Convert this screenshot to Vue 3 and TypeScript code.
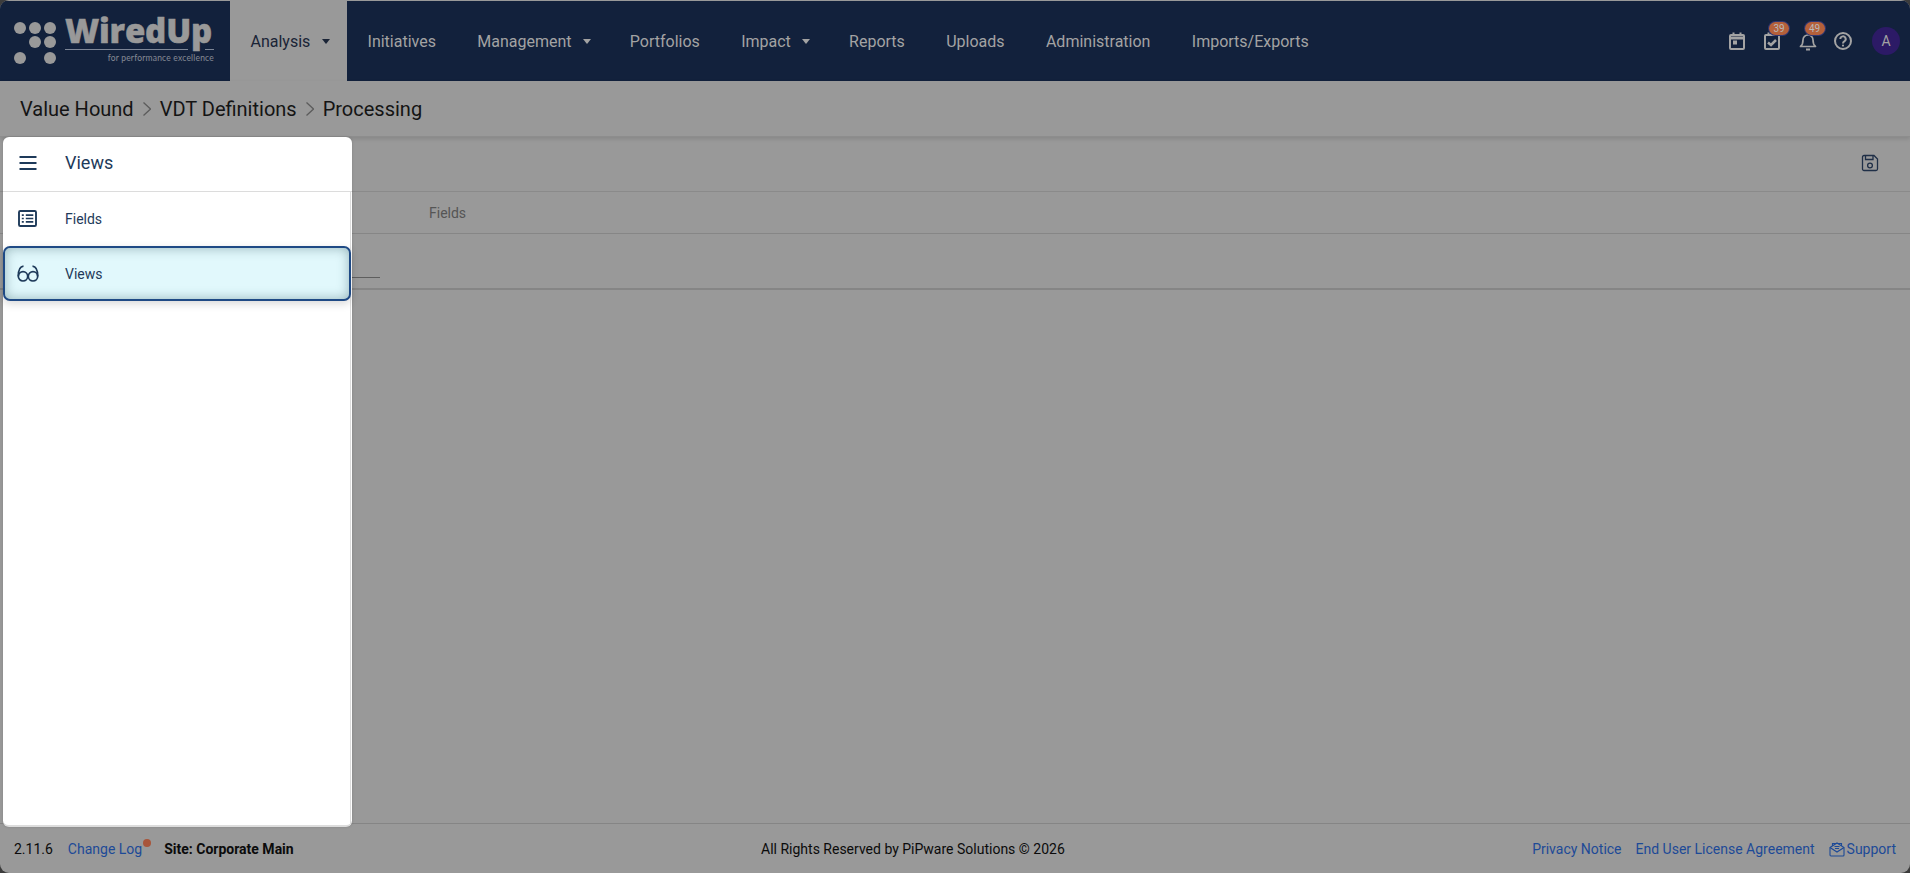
<script setup lang="ts">
interface NavItem { label: string; caret?: boolean; active?: boolean }
const navItems: NavItem[] = [
  { label: 'Analysis', caret: true, active: true },
  { label: 'Initiatives' },
  { label: 'Management', caret: true },
  { label: 'Portfolios' },
  { label: 'Impact', caret: true },
  { label: 'Reports' },
  { label: 'Uploads' },
  { label: 'Administration' },
  { label: 'Imports/Exports' },
]
const crumbs = ['Value Hound', 'VDT Definitions', 'Processing']
const dots = [[6,6],[21,6],[36,6],[21,20],[36,20],[6,36],[36,36]]
</script>

<template>
  <div class="page">
    <header class="topbar">
      <div class="logo">
        <svg class="logo-dots" width="42" height="42" viewBox="0 0 42 42">
          <circle v-for="(d, i) in dots" :key="i" :cx="d[0]" :cy="d[1]" r="6" fill="#999" />
        </svg>
        <div class="logo-text">
          <div class="logo-word">WiredUp</div>
          <div class="logo-line"><i></i><i></i></div>
          <div class="logo-tag">for performance excellence</div>
        </div>
      </div>
      <nav class="nav">
        <a v-for="n in navItems" :key="n.label" class="nav-item" :class="{ active: n.active, caret: n.caret }">
          {{ n.label }}<span v-if="n.caret" class="caret-mark"></span>
        </a>
      </nav>
      <div class="top-icons">
        <svg class="ti" width="22" height="22" viewBox="0 0 22 22" fill="none" stroke="#a3a3a3" stroke-width="2">
          <rect x="4" y="5" width="14" height="14" rx="1" />
          <path d="M4 8h14" stroke-width="3" /><path d="M7.500 2.500v3M14.500 2.500v3" />
          <rect x="7" y="10.500" width="4" height="4" fill="#a3a3a3" stroke="none" />
        </svg>
        <div class="ti-wrap">
          <svg class="ti" width="22" height="22" viewBox="0 0 22 22" fill="none" stroke="#a3a3a3" stroke-width="2">
            <rect x="4" y="5" width="14" height="14" rx="1" />
            <path d="M7 12.500l3 2.500 5-5" stroke-width="2.500" /><path d="M7.500 2.500v3" />
          </svg>
          <span class="badge">39</span>
        </div>
        <div class="ti-wrap">
          <svg class="ti" width="22" height="22" viewBox="0 0 22 22" fill="none" stroke="#a3a3a3" stroke-width="1.700">
            <path d="M3.500 16.500c2-1.500 2.500-3 2.500-6.500a5 5 0 0 1 10 0c0 3.500 .5 5 2.500 6.500z" stroke-linejoin="round" />
            <path d="M9 19.500h4" stroke-width="2" /><path d="M11 3v2" />
          </svg>
          <span class="badge">49</span>
        </div>
        <svg class="ti" width="22" height="22" viewBox="0 0 22 22" fill="none" stroke="#a3a3a3" stroke-width="2">
          <circle cx="11" cy="11" r="8" />
          <path d="M8.300 9a2.700 2.700 0 1 1 4 2.400c-.9.500-1.300 1-1.300 2" />
          <circle cx="11" cy="15.600" r="1.100" fill="#a3a3a3" stroke="none" />
        </svg>
        <div class="avatar">A</div>
      </div>
    </header>

    <div class="crumbs">
      <template v-for="(c, i) in crumbs" :key="c">
        <span>{{ c }}</span>
        <svg v-if="i < crumbs.length - 1" class="chev" width="8" height="16" viewBox="0 0 8 16" fill="none" stroke="#5c5c5c" stroke-width="1.300">
          <path d="M.5 1.500L7.500 8l-7 6.500" />
        </svg>
      </template>
    </div>

    <main class="content">
      <div class="toolbar">
        <svg width="18" height="18" viewBox="0 0 18 18" fill="none" stroke="#1f2f47" stroke-width="1.300">
          <path d="M1.500 3a1.500 1.500 0 0 1 1.500-1.500h10l3.500 3.500v10a1.500 1.500 0 0 1-1.500 1.500H3a1.500 1.500 0 0 1-1.500-1.500z" />
          <path d="M4.500 1.500v4h7.500v-4" /><circle cx="9" cy="11.500" r="2.400" />
        </svg>
      </div>
      <div class="thead"><span class="th-label">Fields</span></div>
      <div class="trow"><span class="row-mark"></span></div>
    </main>

    <footer class="footer">
      <div class="foot-left">
        <span>2.11.6</span>
        <a class="link log">Change Log<i class="log-dot"></i></a>
        <b>Site: Corporate Main</b>
      </div>
      <div class="foot-center">All Rights Reserved by PiPware Solutions © 2026</div>
      <div class="foot-right">
        <a class="link">Privacy Notice</a>
        <a class="link">End User License Agreement</a>
        <a class="link support">
          <svg width="16" height="16" viewBox="0 0 16 16" fill="none" stroke="#1d4a97" stroke-width="1.100">
            <path d="M1 6.500L8 2l7 4.500V14a1 1 0 0 1-1 1H2a1 1 0 0 1-1-1z" />
            <path d="M1 6.500L8 11l7-4.500" /><path d="M3.500 5V2.500h9V5M5.500 5.500h5M6 7.500h4" />
          </svg>Support
        </a>
      </div>
    </footer>

    <aside class="drawer">
      <div class="drawer-head">
        <svg width="18" height="14" viewBox="0 0 18 14" fill="none" stroke="#1e3a5a" stroke-width="2">
          <path d="M0.500 1h17M0.500 7h17M0.500 13h17" />
        </svg>
        <span>Views</span>
      </div>
      <div class="drawer-body">
        <div class="drawer-item first">
          <svg width="19" height="17" viewBox="0 0 19 17" fill="none" stroke="#1e3a5a" stroke-width="1.900">
            <rect x="1" y="1" width="17" height="15" rx="1.300" />
            <path d="M3.800 5.200h2M3.800 8.500h2M3.800 11.800h2M7.800 5.200h7.500M7.800 8.500h7.500M7.800 11.800h7.500" stroke-width="1.700" />
          </svg>
          <span>Fields</span>
        </div>
        <div class="drawer-item selected">
          <svg width="22" height="17" viewBox="0 0 22 17" fill="none" stroke="#1e3a5a" stroke-width="1.700">
            <circle cx="6" cy="11.300" r="4.700" /><circle cx="16" cy="11.300" r="4.700" />
            <path d="M10.700 11.300h.6" />
            <path d="M1.300 11.300C1.300 6 2.500 1.600 6.500 1.200M20.700 11.300c0-5.300-1.200-9.700-5.200-10.100" />
          </svg>
          <span>Views</span>
        </div>
      </div>
    </aside>
  </div>
</template>

<style>
html, body { margin: 0; background: #3c3c3c; overflow: hidden; }
</style>

<style scoped>
.page {
  position: relative;
  box-sizing: border-box;
  width: 1910px;
  height: 873px;
  display: flex;
  flex-direction: column;
  padding-top: 1px;
  border-radius: 9px;
  overflow: hidden;
  background: #999999;
  font-family: Roboto, "Liberation Sans", sans-serif;
  color: #0c0c0c;
}
.topbar {
  height: 80px;
  flex: none;
  display: flex;
  align-items: stretch;
  background: #12213c;
  color: #a3a3a3;
}
.logo {
  width: 230px;
  flex: none;
  display: flex;
  align-items: flex-start;
  box-sizing: border-box;
  padding: 21px 0 0 14px;
}
.logo-dots { flex: none; }
.logo-text { margin-left: 9px; width: 149px; margin-top: -10px; }
.logo-word {
  font-family: "Open Sans", sans-serif;
  font-weight: 800;
  font-size: 33px;
  line-height: 37px;
  height: 37px;
  letter-spacing: -0.200px;
  -webkit-text-stroke: 0.500px #999;
  color: #999;
  white-space: nowrap;
}
.logo-line { display: flex; justify-content: space-between; height: 1px; }
.logo-line i { display: block; background: #7d8697; width: 123px; }
.logo-line i + i { width: 9px; }
.logo-tag {
  font-family: Lato, sans-serif;
  font-size: 8.500px;
  line-height: 11px;
  letter-spacing: 0.200px;
  color: #868b95;
  text-align: right;
  margin-top: 3px;
  white-space: nowrap;
}
.nav { display: flex; align-items: stretch; }
.nav-item {
  display: flex;
  align-items: center;
  padding: 0 20.700px;
  font-size: 16px;
  color: #a3a3a3;
  white-space: nowrap;
}
.nav-item.caret { padding-right: 18px; }
.nav-item.active { background: #999; color: #1a2436; padding-left: 20.500px; padding-right: 17px; }
.caret-mark {
  width: 0; height: 0;
  margin-left: 11.500px;
  border-left: 4px solid transparent;
  border-right: 4px solid transparent;
  border-top: 5px solid currentColor;
}
.top-icons {
  margin-left: auto;
  display: flex;
  align-items: center;
  padding-right: 10px;
  gap: 13.500px;
}
.ti-wrap { position: relative; width: 22px; height: 22px; }
.ti { display: block; flex: none; }
.badge {
  position: absolute;
  left: 8px;
  top: -8px;
  width: 20px;
  height: 13px;
  border-radius: 7px;
  background: #b5603a;
  box-shadow: 0 0 0 1px #2f3672;
  color: #b8b8b8;
  font-size: 10px;
  line-height: 13px;
  text-align: center;
}
.avatar {
  width: 28px;
  height: 28px;
  margin-left: 4.500px;
  border-radius: 50%;
  background: #2c1a66;
  color: #a3a3a3;
  font-size: 14px;
  line-height: 28px;
  text-align: center;
}
.crumbs {
  height: 56px;
  flex: none;
  box-sizing: border-box;
  display: flex;
  align-items: center;
  gap: 9px;
  padding-left: 20px;
  font-size: 20px;
  color: #141414;
  border-bottom: 1px solid #8d8d8d;
  box-shadow: 0 2px 4px rgba(0, 0, 0, 0.12);
}
.chev { flex: none; }
.content { flex: 1; display: flex; flex-direction: column; }
.toolbar {
  height: 55px;
  box-sizing: border-box;
  display: flex;
  justify-content: flex-end;
  align-items: center;
  padding: 0 31px 3px 0;
  border-bottom: 1px solid #8a8a8a;
}
.thead {
  height: 42px;
  box-sizing: border-box;
  padding-left: 429px;
  display: flex;
  align-items: center;
  font-size: 14px;
  color: #555;
  border-bottom: 1px solid #868686;
}
.trow {
  position: relative;
  height: 56px;
  box-sizing: border-box;
  border-bottom: 2px solid #858585;
}
.row-mark {
  position: absolute;
  left: 350px;
  top: 43px;
  width: 30px;
  height: 1px;
  background: #5e5e5e;
}
.footer {
  height: 50px;
  flex: none;
  box-sizing: border-box;
  display: flex;
  justify-content: space-between;
  align-items: center;
  padding: 0 14px;
  font-size: 14px;
  border-top: 1px solid #858585;
  color: #0b0b0b;
}
.foot-left { display: flex; align-items: center; gap: 15px; }
.foot-left b { font-weight: 700; margin-left: 7px; }
.foot-right { display: flex; justify-content: flex-end; gap: 14px; }
.link { color: #1d4a97; }
.log { position: relative; }
.log-dot {
  position: absolute;
  right: -9px;
  top: -2px;
  width: 8px;
  height: 8px;
  border-radius: 50%;
  background: #a8553a;
}
.support { display: flex; align-items: center; gap: 2px; }
.drawer {
  position: absolute;
  left: 3px;
  top: 137px;
  width: 349px;
  height: 690px;
  display: flex;
  flex-direction: column;
  box-sizing: border-box;
  background: #fff;
  border-radius: 6px;
  border-bottom: 2px solid #dcdcdc;
  box-shadow: 0 0 3px rgba(0, 0, 0, 0.15);
}
.drawer-head {
  height: 55px;
  flex: none;
  box-sizing: border-box;
  display: flex;
  align-items: center;
  gap: 28px;
  padding: 0 0 3px 16px;
  font-size: 18px;
  color: #1e3a5a;
  border-bottom: 1px solid #dcdcdc;
}
.drawer-body {
  flex: 1;
  border-right: 1px solid #dcdcdc;
  margin-right: 1px;
}
.drawer-item {
  position: relative;
  height: 55px;
  box-sizing: border-box;
  display: flex;
  align-items: center;
  padding-left: 15px;
  font-size: 14px;
  color: #1e3a5a;
}
.drawer-item svg { flex: none; }
.drawer-item.first { height: 54px; }
.drawer-item.first svg { margin-top: -2px; }
.drawer-item.first span { margin-left: 28px; }
.selected {
  margin-right: -1px;
  background: #e1f8fc;
  border: 2px solid #1f4a85;
  border-radius: 7px;
  padding-left: 12px;
  box-shadow: inset 0 0 12px rgba(40, 80, 90, 0.4), 0 3px 8px rgba(0, 0, 0, 0.15);
}
.selected svg { margin-top: -1px; }
.selected span { margin-left: 26px; }
</style>
